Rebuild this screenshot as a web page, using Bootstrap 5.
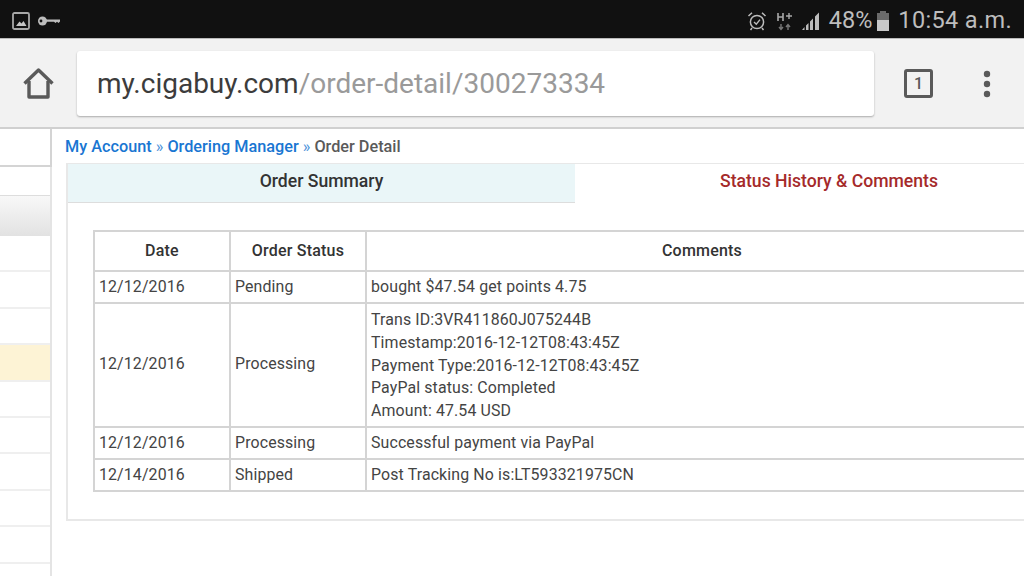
<!DOCTYPE html>
<html lang="en">
<head>
<meta charset="UTF-8">
<title>Order Detail</title>
<link href="https://cdn.jsdelivr.net/npm/bootstrap@5.3.0/dist/css/bootstrap.min.css" rel="stylesheet">
<style>
html, body { height: 100%; overflow: hidden; }
body { width: 1024px; height: 576px; font-family: Roboto, "Liberation Sans", sans-serif; color: #444; background: #fff; }
.status-bar { height: 38px; background: #111; color: #bdbdbd; font-size: 23.5px; padding: 3px 12px 0; }
.status-time { letter-spacing: .35px; margin-left: 6px; }
.hplus-icon { margin-left: 10px; }
.tool-bar { height: 91px; background: #f2f2f2; border-top: 1px solid #bbb; border-bottom: 2px solid #d0d0d0; padding: 1px 0 0 23px; }
.url-box { width: 797px; height: 65px; margin-left: 23px; background: #fff; border-radius: 3px; box-shadow: 0 1px 2px rgba(0,0,0,.3); font-size: 28px; color: #3c3c3c; padding: 1px 0 0 20px; }
.url-path { color: #9a9a9a; }
.tab-icon { width: 29px; height: 29px; margin-left: 30px; border: 3px solid #5a5a5a; border-radius: 3px; font-size: 16px; font-weight: 500; color: #5a5a5a; line-height: 1; }
.dots-icon { margin-left: 49px; }
.page-body { height: 447px; }
.side-col { width: 52px; flex: none; border-right: 2px solid #e4e4e4; }
.side-top { height: 38px; border-bottom: 2px solid #d4d4d4; box-shadow: 2px 0 0 #d4d4d4; }
.side-head { height: 41px; margin-top: 28px; border-top: 1px solid #ddd; background: linear-gradient(#f8f8f8, #e2e2e2); }
.side-row { height: 36.4px; border-bottom: 2px solid #efefef; }
.side-on { background: #fdf3d5; }
.main-col { padding-left: 14px; min-width: 0; flex: 1; }
.crumbs { height: 34px; margin-left: -1px; font-size: 16.25px; font-weight: 500; color: #5a5a5a; padding-top: 7px; line-height: 21px; white-space: nowrap; }
.crumbs a { color: #1976d2; text-decoration: none; }
.crumbs i { color: #4a90d9; font-style: normal; font-weight: 400; }
.order-panel { width: 980px; height: 358px; border: 2px solid #e8e8e8; border-right: 0; border-top-width: 1px; overflow: hidden; }
.tab-cell { height: 39px; flex: none; font-size: 17.6px; font-weight: 500; line-height: 34px; text-align: center; }
.tab-off { width: 507px; background: #eaf6f8; color: #333; border-bottom: 1px solid #ddd; }
.tab-on { width: 508px; color: #a52a2a; }
.hist-wrap { padding: 27px 0 0 25px; }
table.hist-table { width: 946px; table-layout: fixed; border-collapse: collapse; font-size: 15.9px; color: #444; letter-spacing: .13px; }
.hist-table th, .hist-table td { border: 2px solid #d4d4d4; padding: 0 4px 2px; font-weight: 400; line-height: 23px; vertical-align: middle; }
.hist-table th { height: 40px; text-align: center; font-size: 16px; letter-spacing: .2px; font-weight: 500; color: #333; }
.hist-table td { height: 32px; }
.hist-table td.multi { padding-top: 5px; padding-bottom: 3px; line-height: 22.8px; }
.hist-table tr.low-row td { padding-bottom: 0; }
</style>
</head>
<body>
<div class="status-bar d-flex align-items-center">
  <svg width="18" height="18" viewBox="0 0 18 18"><rect x="1" y="1" width="16" height="16" rx="1.5" fill="none" stroke="#a8a8a8" stroke-width="1.8"/><path d="M4 14 7.5 9.5 9.5 11.5 11.5 9 14.5 14Z" fill="#c4c4c4"/></svg>
  <svg class="ms-2" width="24" height="12" viewBox="0 0 24 12"><circle cx="4.5" cy="6" r="4.5" fill="#bdbdbd"/><circle cx="3" cy="6" r="1.4" fill="#111"/><path d="M8 4.5H22V6.5L20.5 8 19 6.8 17.5 8 16 6.8H8Z" fill="#bdbdbd"/></svg>
  <div class="ms-auto d-flex align-items-center">
    <svg width="20" height="20" viewBox="0 0 20 20" fill="none" stroke="#bdbdbd"><circle cx="10" cy="11" r="6.6" stroke-width="1.5"/><path d="M7 11 9.3 13.2 13 8.6" stroke-width="1.4"/><path d="M1.5 5 5 1.8M18.5 5 15 1.8M5 17 3.5 19M15 17 16.5 19" stroke-width="1.5"/></svg>
    <svg class="hplus-icon" width="16" height="20" viewBox="0 0 16 20"><path d="M1 2V10M6 2V10M1 6H6" stroke="#a8a8a8" stroke-width="1.6" fill="none"/><path d="M9 5H15M12 2V8" stroke="#a8a8a8" stroke-width="1.4"/><path d="M4 13V18M2 16 4 18.5 6 16M11 19V14M9 16 11 13.5 13 16" stroke="#777" stroke-width="1.4" fill="none"/></svg>
    <svg class="ms-2" width="20" height="20" viewBox="0 0 20 20" fill="#bdbdbd"><path d="M1 19 3.5 16V19ZM5 14.5 7.5 12V19H5ZM9 10.5 12 7.5V19H9ZM14 5.5 18 1.5V19H14Z"/></svg>
    <span class="ms-2">48%</span>
    <svg class="ms-1" width="14" height="20" viewBox="0 0 14 20"><path d="M4 0H10V2H13V20H1V2H4Z" fill="#6a6a6a"/><rect x="1" y="9" width="12" height="11" fill="#c8c8c8"/></svg>
    <span class="status-time ms-2">10:54 a.m.</span>
  </div>
</div>
<div class="tool-bar d-flex align-items-center">
  <svg width="31" height="32" viewBox="0 0 31 32" fill="none" stroke="#5a5a5a" stroke-width="3.4" stroke-linejoin="round"><path d="M1.5 15.5 15.5 2 29.5 15.5"/><path d="M6 13V29H25V13"/></svg>
  <div class="url-box d-flex align-items-center"><span>my.cigabuy.com<span class="url-path">/order-detail/300273334</span></span></div>
  <div class="tab-icon d-flex align-items-center justify-content-center">1</div>
  <svg class="dots-icon" width="10" height="28" viewBox="0 0 10 28" fill="#5a5a5a"><circle cx="5" cy="4" r="3.2"/><circle cx="5" cy="14" r="3.2"/><circle cx="5" cy="24" r="3.2"/></svg>
</div>
<div class="page-body d-flex">
  <div class="side-col">
    <div class="side-top"></div>
    <div class="side-head"></div>
    <div class="side-row"></div>
    <div class="side-row"></div>
    <div class="side-row"></div>
    <div class="side-row side-on"></div>
    <div class="side-row"></div>
    <div class="side-row"></div>
    <div class="side-row"></div>
    <div class="side-row"></div>
    <div class="side-row"></div>
  </div>
  <div class="main-col">
    <div class="crumbs"><a href="#">My Account</a> <i>»</i> <a href="#">Ordering Manager</a> <i>»</i> Order Detail</div>
    <div class="order-panel">
      <div class="d-flex">
        <div class="tab-cell tab-off">Order Summary</div>
        <div class="tab-cell tab-on">Status History &amp; Comments</div>
      </div>
      <div class="hist-wrap">
        <table class="hist-table">
          <colgroup><col style="width:136px"><col style="width:136px"><col></colgroup>
          <thead><tr><th>Date</th><th>Order Status</th><th>Comments</th></tr></thead>
          <tbody>
            <tr><td>12/12/2016</td><td>Pending</td><td>bought $47.54 get points 4.75</td></tr>
            <tr><td>12/12/2016</td><td>Processing</td><td class="multi">Trans ID:3VR411860J075244B<br>Timestamp:2016-12-12T08:43:45Z<br>Payment Type:2016-12-12T08:43:45Z<br>PayPal status: Completed<br>Amount: 47.54 USD</td></tr>
            <tr class="low-row"><td>12/12/2016</td><td>Processing</td><td>Successful payment via PayPal</td></tr>
            <tr class="low-row"><td>12/14/2016</td><td>Shipped</td><td>Post Tracking No is:LT593321975CN</td></tr>
          </tbody>
        </table>
      </div>
    </div>
  </div>
</div>
<script src="https://cdn.jsdelivr.net/npm/bootstrap@5.3.0/dist/js/bootstrap.bundle.min.js"></script>
</body>
</html>
